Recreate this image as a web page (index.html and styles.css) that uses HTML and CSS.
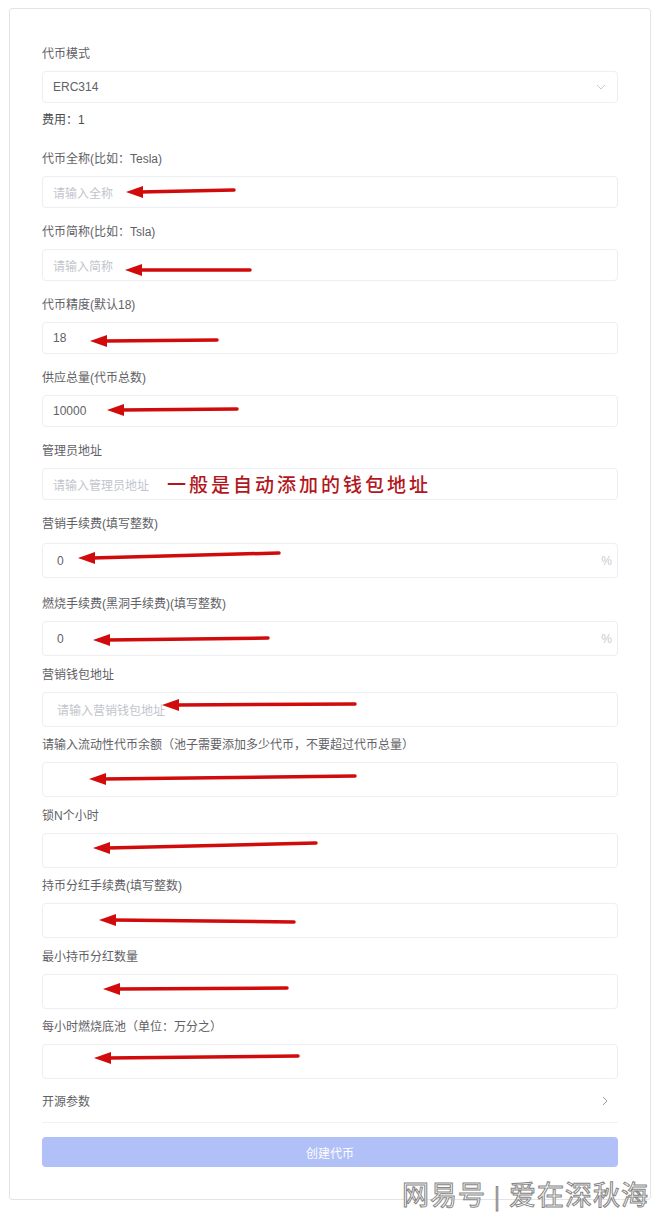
FILE: index.html
```html
<!DOCTYPE html>
<html lang="zh-CN">
<head>
  <meta charset="UTF-8">
  <meta name="viewport" content="width=device-width, initial-scale=1.0">
  <title>创建代币</title>
  <link rel="stylesheet" href="styles.css">
</head>
<body>
  <div class="page">
    <form class="card">
      <div class="field">
        <label class="field-label">代币模式</label>
        <div class="control control--select">
          <span class="value">ERC314</span>
          <svg class="select-arrow" width="10" height="6" viewBox="0 0 10 6"><path d="M1 1 L5 5 L9 1" fill="none" stroke="#c8cbd2" stroke-width="1"/></svg>
        </div>
        <div class="fee">费用：1</div>
      </div>

      <div class="field">
        <label class="field-label">代币全称(比如：Tesla)</label>
        <div class="control"><span class="placeholder">请输入全称</span></div>
      </div>

      <div class="field">
        <label class="field-label">代币简称(比如：Tsla)</label>
        <div class="control"><span class="placeholder">请输入简称</span></div>
      </div>

      <div class="field">
        <label class="field-label">代币精度(默认18)</label>
        <div class="control"><span class="value">18</span></div>
      </div>

      <div class="field">
        <label class="field-label">供应总量(代币总数)</label>
        <div class="control"><span class="value">10000</span></div>
      </div>

      <div class="field">
        <label class="field-label">管理员地址</label>
        <div class="control">
          <span class="placeholder">请输入管理员地址</span>
          <span class="note">一般是自动添加的钱包地址</span>
        </div>
      </div>

      <div class="field field--tall field--spaced">
        <label class="field-label">营销手续费(填写整数)</label>
        <div class="control"><span class="value">0</span><span class="suffix">%</span></div>
      </div>

      <div class="field field--tall">
        <label class="field-label">燃烧手续费(黑洞手续费)(填写整数)</label>
        <div class="control"><span class="value">0</span><span class="suffix">%</span></div>
      </div>

      <div class="field field--tall">
        <label class="field-label">营销钱包地址</label>
        <div class="control"><span class="placeholder">请输入营销钱包地址</span></div>
      </div>

      <div class="field field--tall">
        <label class="field-label">请输入流动性代币余额（池子需要添加多少代币，不要超过代币总量）</label>
        <div class="control"></div>
      </div>

      <div class="field field--tall">
        <label class="field-label">锁N个小时</label>
        <div class="control"></div>
      </div>

      <div class="field field--tall">
        <label class="field-label">持币分红手续费(填写整数)</label>
        <div class="control"></div>
      </div>

      <div class="field field--tall">
        <label class="field-label">最小持币分红数量</label>
        <div class="control"></div>
      </div>

      <div class="field field--tall field--last">
        <label class="field-label">每小时燃烧底池（单位：万分之）</label>
        <div class="control"></div>
      </div>

      <div class="advanced">
        <span>开源参数</span>
        <svg width="6" height="10" viewBox="0 0 6 10"><path d="M1 1 L5 5 L1 9" fill="none" stroke="#9a9da3" stroke-width="1"/></svg>
      </div>

      <button type="button" class="submit">创建代币</button>
    </form>
  </div>

  <!-- red annotation arrows drawn on top of the form -->
  <svg class="arrows" width="660" height="1221" viewBox="0 0 660 1221">
    <g fill="#d10b0b" stroke="#d10b0b" stroke-width="3.5" stroke-linecap="round">
      <line x1="140" y1="192" x2="234" y2="190"/><polygon stroke="none" points="126,192 143,186 143,198"/>
      <line x1="139" y1="270" x2="250" y2="270"/><polygon stroke="none" points="125,270 142,264 142,276"/>
      <line x1="104" y1="341" x2="217" y2="340"/><polygon stroke="none" points="90,341 107,335 107,347"/>
      <line x1="121" y1="410" x2="237" y2="409"/><polygon stroke="none" points="107,410 124,404 124,416"/>
      <line x1="92" y1="558" x2="279" y2="553"/><polygon stroke="none" points="78,558 95,552 95,564"/>
      <line x1="107" y1="640" x2="268" y2="638"/><polygon stroke="none" points="93,640 110,634 110,646"/>
      <line x1="176" y1="705" x2="355" y2="704"/><polygon stroke="none" points="162,705 179,699 179,711"/>
      <line x1="103" y1="779" x2="355" y2="776"/><polygon stroke="none" points="89,779 106,773 106,785"/>
      <line x1="107" y1="848" x2="316" y2="843"/><polygon stroke="none" points="93,848 110,842 110,854"/>
      <line x1="113" y1="920" x2="294" y2="922"/><polygon stroke="none" points="99,920 116,914 116,926"/>
      <line x1="117" y1="989" x2="287" y2="988"/><polygon stroke="none" points="103,989 120,983 120,995"/>
      <line x1="108" y1="1058" x2="298" y2="1056"/><polygon stroke="none" points="94,1058 111,1052 111,1064"/>
    </g>
  </svg>

  <div class="watermark">网易号<span class="bar">|</span>爱在深秋海</div>
</body>
</html>
```

FILE: styles.css
```css
:root {
  --label-color: #5f6166;
  --value-color: #606266;
  --placeholder-color: #c2c5cc;
  --border-color: #eceef2;
  --card-border: #e4e4e4;
  --button-bg: #b1c1f7;
}

* {
  margin: 0;
  padding: 0;
  box-sizing: border-box;
}

body {
  position: relative;
  width: 660px;
  min-height: 1221px;
  font-family: 'Liberation Sans', 'Noto Sans CJK SC', sans-serif;
  font-size: 12px;
  background-color: #ffffff;
  color: var(--label-color);
}

.page {
  padding: 8px 9px 0 9px;
}

.card {
  width: 642px;
  border: 1px solid var(--card-border);
  border-radius: 3px;
  padding: 37px 32px 32px;
  background-color: #fff;
}

.field {
  margin-bottom: 16px;
}

.field-label {
  display: block;
  height: 16px;
  line-height: 16px;
  margin-bottom: 9px;
  color: var(--label-color);
  white-space: nowrap;
}

.control {
  position: relative;
  display: flex;
  align-items: center;
  height: 32px;
  padding: 0 10px;
  border: 1px solid var(--border-color);
  border-radius: 4px;
  background-color: #fff;
}

.control--select {
  justify-content: space-between;
  padding-right: 11px;
}

.value {
  color: var(--value-color);
}

.placeholder {
  color: var(--placeholder-color);
}

.fee {
  margin-top: 9px;
  height: 17px;
  line-height: 17px;
  color: #4a4c50;
  margin-bottom: 22px;
}

.note {
  position: absolute;
  left: 124px;
  top: 3px;
  font-family: 'Noto Sans CJK SC', sans-serif;
  font-size: 19px;
  font-weight: 500;
  line-height: 24px;
  letter-spacing: 3px;
  color: #b3171d;
  white-space: nowrap;
}

.field--tall {
  margin-bottom: 10.5px;
}

.field--tall .control {
  height: 35px;
  padding-left: 14px;
  padding-right: 5px;
}

.field--spaced {
  margin-bottom: 18px;
}

.field--spaced .field-label {
  margin-bottom: 11px;
}

.field--last {
  margin-bottom: 0;
}

.suffix {
  margin-left: auto;
  color: #c8cbd2;
}

.advanced {
  display: flex;
  align-items: center;
  justify-content: space-between;
  height: 44px;
  padding: 0 10px 0 0;
  border-bottom: 1px solid #f1f2f4;
  color: var(--label-color);
}

.submit {
  display: block;
  width: 100%;
  height: 30px;
  margin-top: 14px;
  border: none;
  border-radius: 4px;
  background-color: var(--button-bg);
  color: #ffffff;
  font-family: inherit;
  font-size: 12px;
}

.arrows {
  position: absolute;
  top: 0;
  left: 0;
  pointer-events: none;
}

.watermark {
  position: absolute;
  left: 402px;
  top: 1177px;
  font-family: 'Noto Sans CJK SC', sans-serif;
  font-size: 27px;
  font-weight: 400;
  line-height: 34px;
  letter-spacing: 1px;
  color: #ffffff;
  -webkit-text-stroke: 1px #858585;
  white-space: nowrap;
}

.watermark .bar {
  margin: 0 8px;
  font-size: 22px;
}
```
